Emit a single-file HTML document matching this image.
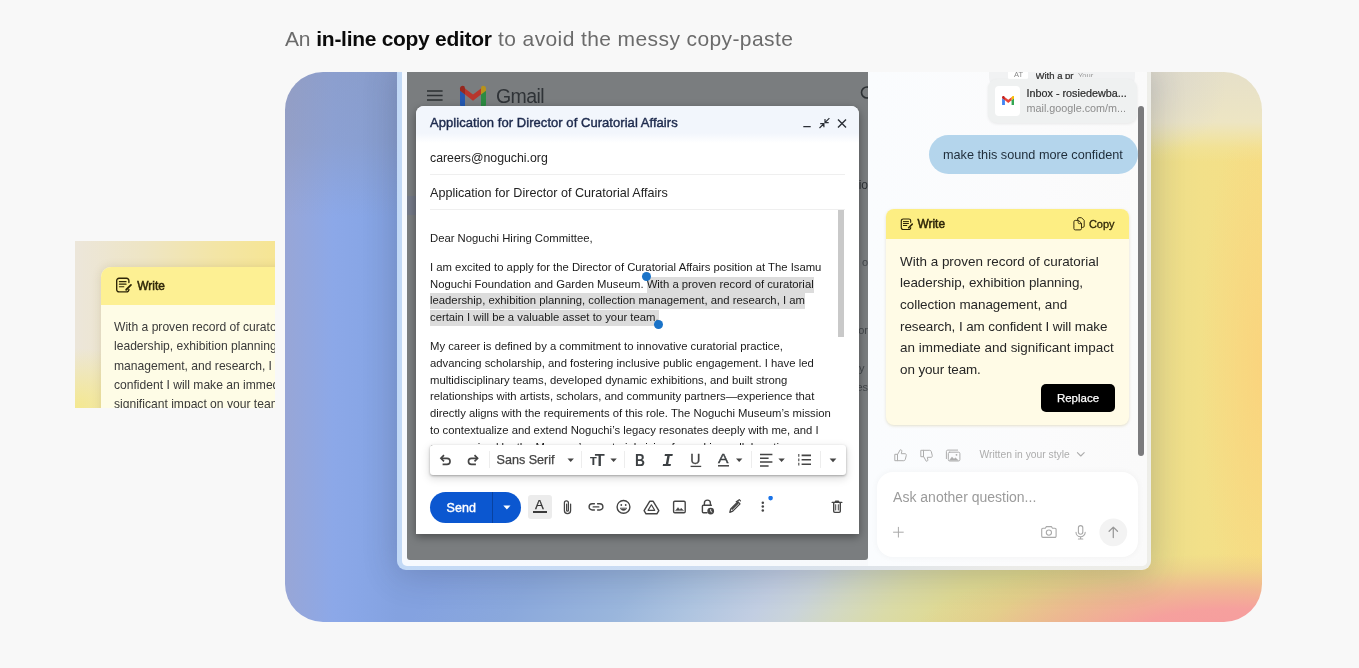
<!DOCTYPE html>
<html lang="en">
<head>
<meta charset="utf-8">
<title>In-line copy editor</title>
<style>
*{box-sizing:border-box;margin:0;padding:0}
html,body{width:1359px;height:668px;overflow:hidden;background:#f8f8f8}
body{position:relative;font-family:"Liberation Sans",Arial,sans-serif;color:#202124;-webkit-font-smoothing:antialiased}
.abs{position:absolute}
#snip,#card{will-change:transform}
.nw{white-space:nowrap}
/* heading */
#head{will-change:transform;left:285px;top:26px;font-size:21px;line-height:26px;color:#6b6b6b;white-space:nowrap}
#head span{position:absolute;top:0;left:0;letter-spacing:-.3px}
#head b{position:absolute;top:0;left:31.3px;color:#0b0b0b;font-weight:700;letter-spacing:-.29px}
#head .c{left:213px;letter-spacing:.4px}
/* left snippet */
#snip{left:75px;top:241px;width:200px;height:167px;overflow:hidden;
 background:
  radial-gradient(90px 60px at 0% 100%, #f4e88f 0%, rgba(244,232,143,0) 100%),
  linear-gradient(90deg,#ece6da 0%,#eee5c4 35%,#f3e5a6 70%,#f6e594 100%);}
#snip .card{left:26px;top:26px;width:240px;height:200px;border-radius:10px 0 0 0;background:#fefce6;box-shadow:0 0 10px rgba(120,100,40,.18);overflow:hidden}
#snip .hd{left:0;top:0;width:100%;height:38px;background:#fdf093}
#snip .bd{left:13px;top:51.2px;font-size:12.1px;line-height:19.25px;color:#3a3a3a;white-space:nowrap}
/* big card */
#card{left:285px;top:72px;width:977px;height:550px;border-radius:38px;overflow:hidden;
 background:
  radial-gradient(320px 78px at 950px 560px, #f69c9e 0%, rgba(246,158,158,.97) 30%, rgba(240,168,150,.72) 55%, rgba(232,186,140,.32) 80%, rgba(230,196,140,0) 100%),
  linear-gradient(125deg,#84a2e0 0,#84a2e0 39px,#8aa8dc 116px,#9ab6dc 206px,#aec4e0 263px,#c2cee2 318px,#cad4da 350px,#d3d9c2 385px,#dadba8 425px,#dfda94 470px,#e2d98a 520px,#e6d688 570px,#eadc8a 633px) 112px 497px/754px 53px no-repeat,
  radial-gradient(75px 70px at 866px 14px, rgba(212,210,205,.62) 0%, rgba(212,210,205,.3) 55%, rgba(212,210,205,0) 100%),
  linear-gradient(180deg,#e6e0c9 0,#ede5c3 50px,rgba(238,230,190,.66) 63px,rgba(239,231,182,.26) 76px,rgba(239,231,180,0) 90px) 866px 0/111px 100% no-repeat,
  radial-gradient(62px 270px at 100% 54%, rgba(251,210,124,.85) 0%, rgba(251,210,124,.42) 50%, rgba(251,210,124,0) 100%),
  linear-gradient(180deg,rgba(140,146,170,.42) 0,rgba(140,146,170,.34) 70px,rgba(140,146,170,0) 145px) 0 0/112px 100% no-repeat,
  linear-gradient(90deg,#98a6d6 0,#8ca8e8 48px,#88a6e6 76px,#84a2e0 112px,#88a6d8 300px,#a0b8d8 420px,#c6d0d8 490px,#d0d4c0 540px,#dcd894 620px,#e2d888 700px,#e6d68a 780px,#eadc8a 866px,#f2e089 915px,#f5df86 977px);}
#win{left:112px;top:-10px;width:754px;height:508px;border-radius:9px;box-shadow:0 5px 34px rgba(45,55,80,.24);background:linear-gradient(90deg,#c2d9f6 0,#cbdcf3 35%,#dde3ea 60%,#ebebe8 80%,#eeeee9 100%)}
#win .in{left:4.5px;top:0;width:745px;height:503.5px;border-radius:0 0 5px 5px;background:linear-gradient(90deg,#f6f9fe 0,#f7f9fc 50%,#f8f8f8 100%)}
#gm{left:10px;top:10px;width:461px;height:488px;background:#7a7d7f;overflow:hidden;border-radius:0 0 3px 3px}
#side{left:471px;top:10px;width:278.5px;height:493.5px;background:linear-gradient(90deg,#fafcfe 0,#fbfbfc 60%,#fafafa 100%);border-radius:0 0 5px 0;overflow:hidden}

/* gmail */
#gm .t{color:#2f3337}
#cw{left:9px;top:34px;width:443px;height:428px;background:#fff;border-radius:8px 8px 0 0;box-shadow:0 3px 9px rgba(0,0,0,.38);overflow:hidden}
#cw .hd{left:0;top:0;width:100%;height:37px;background:linear-gradient(180deg,#f2f6fc 0,#f2f6fc 27px,#fff 37px)}
#cw .ttl{left:14px;top:9px;font-size:13px;font-weight:400;color:#1d2a4d;line-height:16px;letter-spacing:.05px;-webkit-text-stroke:.42px #1d2a4d}
#cw .to{left:14px;top:44px;font-size:12.3px;color:#222;line-height:16px}
#cw .sub{left:14px;top:79px;font-size:12.6px;color:#222;line-height:16px}
#cw .ln{left:14px;height:1px;background:#efefef;width:415px}
#cw .body{left:14px;top:124.2px;width:420px;font-size:11.3px;line-height:16.9px;color:#1b1b1b}
#cw .body p{margin:0 0 11.5px 0;white-space:nowrap}
#cw .sel{background:#dcdcdc;padding:1px 0 3px 0}
#cw .dot{width:9px;height:9px;border-radius:50%;background:#1a73c8}
#fmt{left:14px;top:338.7px;width:415.5px;height:30.2px;background:#fff;border-radius:3px;box-shadow:0 1px 2.5px rgba(0,0,0,.3),0 3px 8px 1px rgba(0,0,0,.13)}
#fmt .sp{top:6.5px;width:1px;height:16.5px;background:#ededed}
#send{left:14px;top:386px;width:91px;height:31px;border-radius:16px;background:#0b57d0}

/* side panel */
#side{font-family:"Liberation Sans",Arial,sans-serif}
#chip{left:119.5px;top:6.5px;width:149.5px;height:44.5px;border-radius:9px;background:#eff1f1;box-shadow:0 1px 3px rgba(0,0,0,.08)}
#bub{left:61px;top:62.7px;width:208.5px;height:39.3px;border-radius:20px;background:#b4d5ec}
#yc{left:17.7px;top:137.2px;width:243px;height:215.5px;border-radius:8px;background:#fffbe6;box-shadow:0 1px 3px rgba(160,140,60,.25);overflow:hidden}
#yc .hd{left:0;top:0;width:100%;height:30px;background:#fdee83}
#yc .tx{left:14.4px;top:41.5px;font-size:13.45px;line-height:21.65px;color:#262626;white-space:nowrap}
#rep{left:155.3px;top:174.8px;width:74px;height:27.6px;border-radius:5px;background:#000;color:#fff;font-size:11.5px;line-height:29.4px;text-align:center;-webkit-text-stroke:.25px #fff}
#inp{left:8.6px;top:399.8px;width:261.4px;height:85.4px;border-radius:16px;background:#fff;box-shadow:0 0 7px rgba(0,0,0,.045)}
</style>
</head>
<body>
<div id="head" class="abs"><span>An </span><b>in-line copy editor</b><span class="c">to avoid the messy copy-paste</span></div>

<div id="snip" class="abs">
 <div class="card abs">
  <div class="hd abs"></div>
  <svg class="abs" style="left:14px;top:9.5px" width="18.2" height="16.9" viewBox="0 0 14 13" fill="none" stroke="#2e2608" stroke-width="1.050" stroke-linecap="round" stroke-linejoin="round"><path d="M10.7 4.3V2.8A1.8 1.8 0 0 0 8.9 1H3.1A1.8 1.8 0 0 0 1.3 2.8v6.9a1.8 1.8 0 0 0 1.8 1.8h5.8a1.8 1.8 0 0 0 1.8-1.8v-.2"/><path d="M3.4 3.6h5.1M3.4 5.5h5.1M3.4 7.5h3.4" stroke-width=".9"/><path d="M8.6 9.8l3.7-3.7" stroke-width="1.4"/></svg>
  <div class="abs nw" style="left:36.3px;top:11px;font-size:11.9px;font-weight:400;color:#2e2608;line-height:16px;-webkit-text-stroke:.5px #2e2608">Write</div>
  <div class="bd abs">With a proven record of curatorial<br>leadership, exhibition planning, collection<br>management, and research, I am<br>confident I will make an immediate and<br>significant impact on your team.</div>
 </div>
</div>

<div id="card" class="abs">
 <div id="win" class="abs">
  <div class="in abs"></div>
  <div id="gm" class="abs">
   <!-- header of gmail (dimmed) -->
   <svg class="abs" style="left:19px;top:17px" width="18" height="13" viewBox="0 0 18 13"><path d="M1 2h15.6M1 6.5h15.6M1 11h15.6" stroke="#2c3033" stroke-width="1.7"/></svg>
   <svg class="abs" style="left:52px;top:13px" width="28" height="22" viewBox="0 0 28 22"><path d="M1 3.2V20a1 1 0 0 0 1 1h4V9.6L1 5.6z" fill="#2458b0"/><path d="M22 21h4a1 1 0 0 0 1-1V3.2l-5 6.4z" fill="#2c8a42"/><path d="M22 3.5V9.6l5-3.8V3.4c0-2.5-2.8-3.4-4.4-2.1z" fill="#b8921a"/><path d="M6 9.6V3.5l8 6.1 8-6.1v6.1l-8 6.1z" fill="#b8362c"/><path d="M1 3.4v2.4l5 3.8V3.5L5.4 1.3C3.8 0 1 .9 1 3.4z" fill="#96281f"/></svg>
   <div class="abs nw t" style="left:89px;top:12px;font-size:19.5px;line-height:24px;letter-spacing:-.6px">Gmail</div>
   <svg class="abs" style="left:452px;top:13px" width="16" height="16" viewBox="0 0 16 16" fill="none" stroke="#2c3033" stroke-width="1.6"><circle cx="8" cy="7.5" r="5.5"/></svg>
   <div class="abs" style="left:0;top:124px;width:9px;height:19px;background:#747987"></div>
   <div class="abs nw t" style="left:452px;top:105px;font-size:12px;line-height:16px;width:9px;overflow:hidden;direction:rtl">io</div>
   <div class="abs nw t" style="left:452px;top:182px;font-size:11px;line-height:16px;width:9px;overflow:hidden;direction:rtl;color:#44484c">o</div>
   <div class="abs nw t" style="left:452px;top:250px;font-size:11px;line-height:16px;width:9px;overflow:hidden;direction:rtl;color:#44484c">or</div>
   <div class="abs nw t" style="left:452px;top:288px;font-size:11px;line-height:16px;width:9px;overflow:hidden;color:#44484c">y ·</div>
   <div class="abs nw t" style="left:452px;top:307px;font-size:11px;line-height:16px;width:9px;overflow:hidden;direction:rtl;color:#44484c">es</div>

   <div id="cw" class="abs">
    <div class="hd abs"></div>
    <div class="ttl abs nw">Application for Director of Curatorial Affairs</div>
    <svg class="abs" style="left:386px;top:11px" width="46" height="13" viewBox="0 0 46 13" fill="none" stroke="#2b2f36" stroke-width="1.4"><path d="M1.3 9.6h7.4"/><path d="M17.5 11l4.2-4.2M18.2 6.6h3.7v3.7" stroke-width="1.2"/><path d="M27.4 1.2l-4.2 4.2M26.7 5.6H23V1.9" stroke-width="1.2"/><path d="M36 2.4l8 8M44 2.4l-8 8"/></svg>
    <div class="to abs nw">careers@noguchi.org</div>
    <div class="ln abs" style="top:68px"></div>
    <div class="sub abs nw">Application for Director of Curatorial Affairs</div>
    <div class="ln abs" style="top:103px"></div>
    <div class="abs" style="left:421.5px;top:104px;width:6.5px;height:127px;background:#c9c9c9"></div>
    <div class="body abs">
     <p>Dear Noguchi Hiring Committee,</p>
     <p>I am excited to apply for the Director of Curatorial Affairs position at The Isamu<br>Noguchi Foundation and Garden Museum. <span class="sel">With a proven record of curatorial</span><br><span class="sel">leadership, exhibition planning, collection management, and research, I am</span><br><span class="sel">certain I will be a valuable asset to your team.</span></p>
     <p>My career is defined by a commitment to innovative curatorial practice,<br>advancing scholarship, and fostering inclusive public engagement. I have led<br>multidisciplinary teams, developed dynamic exhibitions, and built strong<br>relationships with artists, scholars, and community partners—experience that<br>directly aligns with the requirements of this role. The Noguchi Museum’s mission<br>to contextualize and extend Noguchi’s legacy resonates deeply with me, and I<br>am energized by the Museum’s curatorial vision for making collaborative<br>programs that reach new audiences.</p>
    </div>
    <div class="dot abs" style="left:226px;top:166px"></div>
    <div class="dot abs" style="left:237.5px;top:213.5px"></div>
    <div class="abs" style="left:0;top:372px;width:100%;height:56px;background:#fff"></div>
    <div id="fmt" class="abs">
     <svg class="abs" style="left:0;top:0" width="416" height="31" viewBox="0 0 416 31" fill="none" stroke="#444" stroke-width="1.5" stroke-linecap="butt">
      <!-- undo -->
      <path d="M11.2 13.3h5.8a3.050 3.050 0 0 1 0 6.1h-4.4" stroke-width="1.650"/><path d="M14 10.2l-3.1 3.1 3.1 3.1" stroke-width="1.650"/>
      <!-- redo -->
      <path d="M47.3 13.3h-5.8a3.050 3.050 0 0 0 0 6.1h4.4" stroke-width="1.650"/><path d="M44.5 10.2l3.1 3.1-3.1 3.1" stroke-width="1.650"/>
      <!-- carets -->
      <g fill="#444" stroke="none"><path d="M137.5 13.6h6.4l-3.2 3.4z"/><path d="M180.4 13.6h6.4l-3.2 3.4z"/><path d="M306 13.6h6.4l-3.2 3.4z"/><path d="M348.4 13.6h6.4l-3.2 3.4z"/><path d="M399.6 13.6h6.8l-3.4 3.6z"/></g>
      <!-- align -->
      <path d="M330 9.5h12.4M330 13.3h8.6M330 17.1h12.4M330 20.9h8.6" stroke-width="1.5"/>
      <!-- list -->
      <path d="M371.6 10.4h9.4M371.6 14.8h9.4M371.6 19.2h9.4" stroke-width="1.6"/><path d="M368.8 8.9v2.8M368.8 13.4v2.8M368.8 17.8v2.8" stroke-width="1.1"/>
      <!-- A underline, U underline -->
      <path d="M288 20.8h11" stroke-width="1.5"/><path d="M260.6 21.4h10.6" stroke-width="1.3"/>
     </svg>
     <div class="sp abs" style="left:59px"></div>
     <div class="abs nw" style="left:66.5px;top:7px;font-size:12.6px;line-height:16px;color:#444;-webkit-text-stroke:.25px #444">Sans Serif</div>
     <div class="sp abs" style="left:151px"></div>
     <div class="abs nw" style="left:159.9px;top:10.8px;font-size:10.9px;line-height:12px;font-weight:700;color:#3c4043;-webkit-text-stroke:.2px #3c4043">T</div>
     <div class="abs nw" style="left:164.8px;top:6px;font-size:16.3px;line-height:18px;font-weight:700;color:#3c4043">T</div>
     <div class="sp abs" style="left:194px"></div>
     <div class="abs nw" style="left:205.4px;top:5.3px;font-size:16.4px;line-height:20px;font-weight:700;color:#3c4043;transform:scaleX(.84);transform-origin:0 0">B</div>
     <div class="abs nw" style="left:232.3px;top:6.6px;font-size:17.6px;line-height:20px;font-weight:700;font-style:italic;color:#3c4043;font-family:'Liberation Mono',monospace">I</div>
     <div class="abs nw" style="left:260.3px;top:4px;font-size:14px;line-height:20px;color:#444;-webkit-text-stroke:.3px #444">U</div>
     <div class="abs nw" style="left:288.4px;top:4.4px;font-size:12.8px;line-height:20px;color:#3c4043;-webkit-text-stroke:.35px #3c4043;transform:scaleX(1.22);transform-origin:0 0">A</div>
     <div class="sp abs" style="left:320.5px"></div>
     <div class="sp abs" style="left:390px"></div>
    </div>
    <div id="send" class="abs">
     <div class="abs nw" style="left:16.6px;top:7.5px;font-size:12.5px;line-height:16px;color:#fff;font-weight:400;letter-spacing:.05px;-webkit-text-stroke:.4px #fff">Send</div>
     <div class="abs" style="left:62px;top:0;width:1px;height:31px;background:#0842a0"></div>
     <svg class="abs" style="left:72.5px;top:13.4px" width="8" height="5" viewBox="0 0 8 5"><path d="M.3.5h7.2L3.9 4.4z" fill="#fff"/></svg>
    </div>
    <div class="abs" style="left:112px;top:388.5px;width:24px;height:24px;border-radius:3px;background:#ececec"></div>
    <div class="abs nw" style="left:119.4px;top:391px;font-size:12px;line-height:16px;color:#333;-webkit-text-stroke:.25px #333;transform:scaleX(1.1);transform-origin:0 0">A</div>
    <div class="abs" style="left:117.4px;top:405px;width:13.6px;height:2.3px;background:#3a3a3a"></div>
    <svg class="abs" style="left:140px;top:390px" width="300" height="22" viewBox="0 0 300 22" fill="none" stroke="#444" stroke-width="1.4" stroke-linecap="round" stroke-linejoin="round">
     <!-- clip -->
     <path d="M14.6 8v6.4a3.1 3.1 0 0 1-6.2 0V6.8a2 2 0 0 1 4 0v7.4a.9.9 0 0 1-1.8 0V8" stroke-width="1.25"/>
     <!-- link -->
     <path d="M38.4 14h-2.2a3.1 3.1 0 0 1 0-6.2h2.2M41.6 7.8h2.2a3.1 3.1 0 0 1 0 6.2h-2.2M37.2 10.9h5.6"/>
     <!-- emoji -->
     <circle cx="67.5" cy="10.9" r="6.4"/><path d="M64.3 12.4a3.5 3.5 0 0 0 6.4 0z" fill="#444" stroke-width=".6"/><circle cx="65.3" cy="9" r=".9" fill="#444" stroke="none"/><circle cx="69.7" cy="9" r=".9" fill="#444" stroke="none"/>
     <!-- drive -->
     <path d="M93.7 5.3h3.5l5.6 9.4-1.9 3.1H90l-1.9-3.1z"/><path d="M95.4 8.8l3.3 5.5h-6.6z" stroke-width="1.2"/>
     <!-- image -->
     <rect x="117.6" y="5.2" width="11.6" height="11.6" rx="1.2"/><path d="M119.6 14.6l2.4-3 1.8 2.1 1.4-1.5 2.3 2.4z" fill="#444" stroke-width=".4"/>
     <!-- lock -->
     <path d="M148.4 9.2V7.1a3 3 0 0 1 6 0v2.1"/><path d="M155.4 9.3h-8a1 1 0 0 0-1 1v5.4a1 1 0 0 0 1 1h3.6"/><circle cx="154.7" cy="15.1" r="3.4" fill="#444" stroke="none"/><path d="M154.7 13.5v1.8l1.1.7" stroke="#fff" stroke-width=".9"/>
     <!-- pen -->
     <path d="M173.8 16.3l.9-3.3 7.2-7.2 2.1 2.1-7.2 7.2z" stroke-width="1.3"/><path d="M180.2 5.7l3.1-2 1.2 1.2" stroke-width="1.2"/><path d="M175.2 12.9l6.5-6.5 1.1 1.1-6.5 6.5z" fill="#444" stroke="none"/>
     <!-- more -->
     <g fill="#444" stroke="none"><circle cx="206.8" cy="6.7" r="1.25"/><circle cx="206.8" cy="10.6" r="1.25"/><circle cx="206.8" cy="14.5" r="1.25"/></g>
     <circle cx="214.6" cy="2.1" r="2.3" fill="#1a73e8" stroke="none"/>
     <!-- trash -->
     <path d="M277.7 7v8.3a1.1 1.1 0 0 0 1.1 1.1h4.4a1.1 1.1 0 0 0 1.1-1.1V7" stroke-width="1.4"/><path d="M276.2 6.4h9.6M279.2 6l.5-.9h2.6l.5.9" stroke-width="1.4"/><path d="M279.7 8.7v5.3M282.3 8.7v5.3" stroke-width="1"/>
    </svg>
   </div>
  </div>
  <div id="side" class="abs">
   <div class="abs" style="left:121px;top:-8px;width:146px;height:22px;border-radius:8px;background:#f1f2f3"></div>
   <div class="abs" style="left:140px;top:-4px;width:20px;height:11.5px;border-radius:3px;background:#fff"></div>
   <div class="abs nw" style="left:146px;top:-2.5px;font-size:7.5px;line-height:10px;color:#8a8a8a;height:8.5px;overflow:hidden">AT</div>
   <div class="abs nw" style="left:167.5px;top:-2.5px;font-size:9.5px;line-height:12px;color:#333;height:9px;overflow:hidden;-webkit-text-stroke:.25px #333">With a pr</div>
   <div class="abs nw" style="left:210px;top:-1px;font-size:7.5px;line-height:10px;color:#999;height:6px;overflow:hidden">Your ...</div>
   <div id="chip" class="abs">
    <div class="abs" style="left:7.5px;top:7px;width:25px;height:30px;border-radius:4px;background:#fff"></div>
    <svg class="abs" style="left:14px;top:17px" width="12.5" height="9.5" viewBox="0 0 26 20"><path d="M0 3v15.2a1.8 1.8 0 0 0 1.8 1.8H6V9.2L0 4.7z" fill="#4285f4"/><path d="M20 20h4.2a1.8 1.8 0 0 0 1.8-1.8V3l-6 6.2z" fill="#34a853"/><path d="M20 2.8v6.4l6-4.5V2.6C26 .3 23.4-.8 21.6.6z" fill="#fbbc04"/><path d="M6 9.2V2.8l7 5.3 7-5.3v6.4l-7 5.3z" fill="#ea4335"/><path d="M0 2.6v2.1l6 4.5V2.8L4.4.6C2.6-.8 0 .3 0 2.6z" fill="#c5221f"/></svg>
    <div class="abs nw" style="left:39px;top:7.4px;font-size:10.8px;line-height:14px;color:#2a2a2a;-webkit-text-stroke:.2px #2a2a2a">Inbox - rosiedewba...</div>
    <div class="abs nw" style="left:39px;top:22.3px;font-size:10.8px;line-height:14px;color:#8c8c8c">mail.google.com/m...</div>
   </div>
   <div class="abs" style="left:270.2px;top:34px;width:5.6px;height:349.5px;border-radius:3px;background:#7b7b7d"></div>
   <div id="bub" class="abs"><div class="abs nw" style="left:14px;top:12.6px;font-size:12.7px;line-height:16px;color:#1f2d3a">make this sound more confident</div></div>
   <div id="yc" class="abs">
    <div class="hd abs"></div>
    <svg class="abs" style="left:14.5px;top:8.5px" width="14" height="13" viewBox="0 0 14 13" fill="none" stroke="#2e2608" stroke-width="1.15" stroke-linecap="round" stroke-linejoin="round"><path d="M10.7 4.3V2.8A1.8 1.8 0 0 0 8.9 1H3.1A1.8 1.8 0 0 0 1.3 2.8v6.9a1.8 1.8 0 0 0 1.8 1.8h5.8a1.8 1.8 0 0 0 1.8-1.8v-.2"/><path d="M3.4 3.6h5.1M3.4 5.5h5.1M3.4 7.5h3.4" stroke-width="1"/><path d="M8.6 9.8l3.7-3.7" stroke-width="1.5"/></svg>
    <div class="abs nw" style="left:31.8px;top:7px;font-size:11.9px;line-height:16px;font-weight:400;color:#2e2608;-webkit-text-stroke:.5px #2e2608">Write</div>
    <svg class="abs" style="left:187px;top:7.5px" width="12" height="14" viewBox="0 0 12 14" fill="none" stroke="#3a3010" stroke-width="1" stroke-linecap="round" stroke-linejoin="round"><path d="M5.2 3.4H2.3A1.4 1.4 0 0 0 .9 4.8v6.7a1.4 1.4 0 0 0 1.4 1.4h4.8a1.4 1.4 0 0 0 1.4-1.4V6.7z"/><path d="M5.2 3.6v2a1 1 0 0 0 1 1h2.1" stroke-width=".9"/><path d="M4.6 3.2V2.1A1.4 1.4 0 0 1 6 .7h2.5l2.7 2.7v5.6a1.4 1.4 0 0 1-1.4 1.4H8.7"/></svg>
    <div class="abs nw" style="left:203.2px;top:7px;font-size:11px;line-height:16px;color:#2e2608;-webkit-text-stroke:.3px #2e2608">Copy</div>
    <div class="tx abs">With a proven record of curatorial<br><span style="letter-spacing:-.05px">leadership, exhibition planning,</span><br><span style="letter-spacing:-.04px">collection management, and</span><br><span style="letter-spacing:-.095px">research, I am confident I will make</span><br>an immediate and significant impact<br><span style="letter-spacing:-.12px">on your team.</span></div>
    <div id="rep" class="abs">Replace</div>
   </div>
   <svg class="abs" style="left:24px;top:374px" width="200" height="18" viewBox="0 0 200 18" fill="none" stroke="#adadad" stroke-width="1" stroke-linecap="round" stroke-linejoin="round">
    <path d="M3.2 8.3h2.3v6.4H3.2z"/><path d="M5.5 8.6l2.7-4.8c.9-.3 1.7.4 1.6 1.4l-.5 2.5h3.7c.9 0 1.5.8 1.3 1.6l-1 4.1c-.2.8-.8 1.3-1.6 1.3H5.5"/>
    <path d="M38.4 10.7h2.3V4.3h-2.3z" transform="translate(-9.2 0)"/><path d="M40.7 10.4l2.7 4.8c.9.3 1.7-.4 1.6-1.4l-.5-2.5h3.7c.9 0 1.5-.8 1.3-1.6l-1-4.1c-.2-.8-.8-1.3-1.6-1.3h-6.2" transform="translate(-9.2 0)"/>
    <rect x="56.3" y="6.2" width="11.6" height="8.8" rx="1.4"/><path d="M54.4 12.6V5.5a1.4 1.4 0 0 1 1.4-1.4h9.8"/><path d="M57.4 14.2l2.6-3.3 2 2.2 1.4-1.3 2.8 2.4z" fill="#adadad" stroke-width=".4"/><circle cx="64.5" cy="8.8" r=".9" fill="#adadad" stroke="none"/>
    <path d="M185.4 6.6l3.4 3.4 3.4-3.4" stroke-width="1.1"/>
   </svg>
   <div class="abs nw" style="left:111.5px;top:376.1px;font-size:10.3px;line-height:13px;color:#adadad">Written in your style</div>
   <div id="inp" class="abs">
    <div class="abs nw" style="left:16.5px;top:16.5px;font-size:14px;line-height:18px;color:#9b9b9b">Ask another question...</div>
    <svg class="abs" style="left:0;top:44px" width="261" height="32" viewBox="0 0 261 32" fill="none" stroke="#a9a9a9" stroke-width="1.1" stroke-linecap="round" stroke-linejoin="round">
     <path d="M16.5 16.2h9.8M21.4 11.3v9.8" stroke-width="1"/>
     <path d="M166 12.2h2.3l1.1-1.6h5l1.1 1.6h2.3a1.3 1.3 0 0 1 1.3 1.3v6.6a1.3 1.3 0 0 1-1.3 1.3H166a1.3 1.3 0 0 1-1.3-1.3v-6.6a1.3 1.3 0 0 1 1.3-1.3z"/><circle cx="171.9" cy="16.6" r="2.6"/>
     <rect x="201.4" y="9.6" width="4.4" height="8.6" rx="2.2"/><path d="M199 16.2a4.6 4.6 0 0 0 9.2 0M203.6 20.8v2.2M201.4 23h4.4"/>
     <circle cx="236.3" cy="16.3" r="13.9" fill="#f3f3f3" stroke="none"/>
     <path d="M236.3 21.6V11.2M232.1 15.3l4.2-4.2 4.2 4.2" stroke="#9a9a9a" stroke-width="1.3"/>
    </svg>
   </div>
  </div>
 </div>
</div>
</body>
</html>
